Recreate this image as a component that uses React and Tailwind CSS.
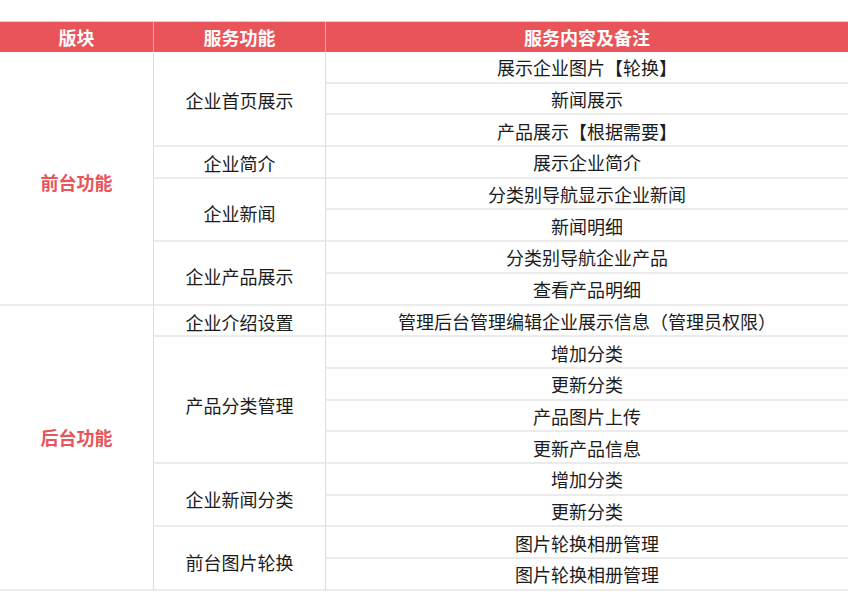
export default function App() {
  const font = { fontFamily: '"Noto Sans CJK SC", "Noto Sans", sans-serif' };
  const c3 = [
    "展示企业图片【轮换】",
    "新闻展示",
    "产品展示【根据需要】",
    "展示企业简介",
    "分类别导航显示企业新闻",
    "新闻明细",
    "分类别导航企业产品",
    "查看产品明细",
    "管理后台管理编辑企业展示信息（管理员权限）",
    "增加分类",
    "更新分类",
    "产品图片上传",
    "更新产品信息",
    "增加分类",
    "更新分类",
    "图片轮换相册管理",
    "图片轮换相册管理",
  ];
  const cell3 =
    "col-start-3 border-l border-l-[#dcdcdc] border-b-2 border-b-[#ebebeb] flex items-center justify-center text-[#1c1c1c] text-[18px] pt-[2px]";
  const cell2 =
    "col-start-2 border-l border-l-[#dcdcdc] border-b-2 border-b-[#ebebeb] flex items-center justify-center text-[#1c1c1c] text-[18px]";
  return (
    <div className="w-[848px] h-[610px] bg-white pt-[21px]" style={font}>
      <div className="grid grid-cols-[153px_172px_1fr] h-[31px] bg-[#e8545a] border-t border-t-[#f3c9c4]">
        <div className="flex items-center justify-center text-white font-bold text-[18px]">版块</div>
        <div className="flex items-center justify-center text-white font-bold text-[18px] border-l border-l-[#f0a5a5]">服务功能</div>
        <div className="flex items-center justify-center text-white font-bold text-[18px] border-l border-l-[#f0a5a5]">服务内容及备注</div>
      </div>
      <div className="grid grid-cols-[153px_172px_1fr] grid-rows-[repeat(17,31.7px)]">
        <div className="col-start-1 row-start-1 row-span-8 border-b-2 border-b-[#ebebeb] flex items-center justify-center text-[#e8545a] font-bold text-[18px] pt-[10px]">前台功能</div>
        <div className="col-start-1 row-start-9 row-span-9 border-b-2 border-b-[#ebebeb] flex items-center justify-center text-[#e8545a] font-bold text-[18px] pb-[20px]">后台功能</div>

        <div className={cell2 + " row-start-1 row-span-3 pt-[4px]"}>企业首页展示</div>
        <div className={cell2 + " row-start-4 row-span-1 pt-[3px]"}>企业简介</div>
        <div className={cell2 + " row-start-5 row-span-2 pt-[8px]"}>企业新闻</div>
        <div className={cell2 + " row-start-7 row-span-2 pt-[8px]"}>企业产品展示</div>
        <div className={cell2 + " row-start-9 row-span-1 pt-[4px]"}>企业介绍设置</div>
        <div className={cell2 + " row-start-10 row-span-4 pt-[12px]"}>产品分类管理</div>
        <div className={cell2 + " row-start-14 row-span-2 pt-[10px]"}>企业新闻分类</div>
        <div className={cell2 + " row-start-16 row-span-2 pt-[8px]"}>前台图片轮换</div>

        {c3.map((t, i) => (
          <div key={i} className={cell3} style={{ gridRowStart: i + 1 }}>
            {t}
          </div>
        ))}
      </div>
    </div>
  );
}
